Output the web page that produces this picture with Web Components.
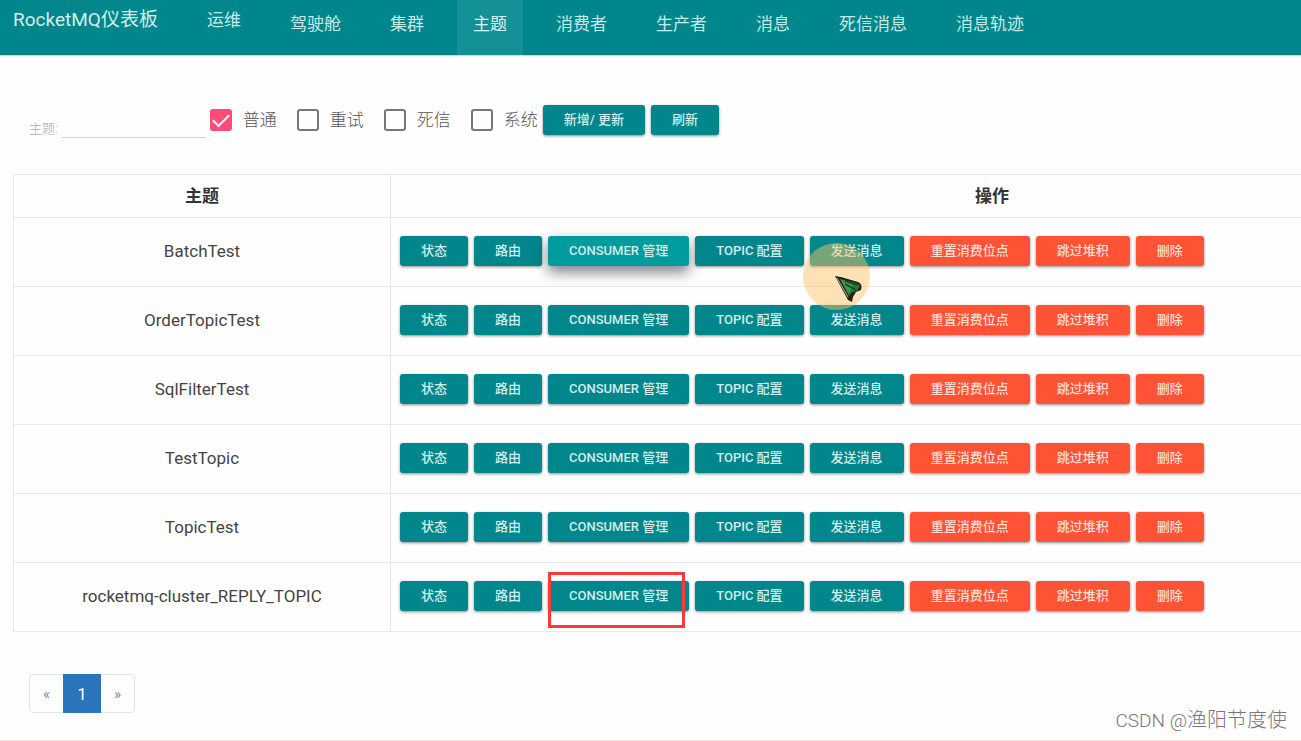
<!DOCTYPE html>
<html lang="zh-CN">
<head>
<meta charset="utf-8">
<title>RocketMQ仪表板</title>
<style>
body { margin: 0; background: #fefefe; font-family: Roboto, "Noto Sans CJK SC", sans-serif; font-size: 17px; line-height: 24px; color: #333; }
</style>
</head>
<body>
<mq-dashboard></mq-dashboard>
<script>
function define(name, html, setup) {
  const template = document.createElement('template');
  template.innerHTML = '<style>*,:host{box-sizing:border-box}:host([hidden]){display:none}</style>' + html;
  customElements.define(name, class extends HTMLElement {
    constructor() {
      super();
      this.attachShadow({ mode: 'open' }).append(template.content.cloneNode(true));
    }
    connectedCallback() { if (setup) setup(this, this.shadowRoot); }
  });
}

define('mq-nav-item', `
<style>
:host { display: flex; }
a { display: flex; align-items: flex-start; padding: 12px 16px 0; color: #c6eaea; text-decoration: none; white-space: nowrap; }
:host([active]) a { background: #149196; color: #d8f2f2; }
:host([menu]) a { padding-top: 8px; }
</style>
<a href="#"><slot></slot></a>`);

define('mq-navbar', `
<style>
:host { display: block; }
nav { display: flex; height: 55px; background: #00868b; box-shadow: 0 1px 0 #b4e4e6; }
.brand { padding: 8px 33px 0 13px; font-size: 19px; color: #d3eeee; text-decoration: none; white-space: nowrap; }
.items { display: flex; gap: 17px; }
</style>
<nav>
<a class="brand" href="#">RocketMQ仪表板</a>
<div class="items">
<mq-nav-item menu>运维</mq-nav-item><mq-nav-item>驾驶舱</mq-nav-item><mq-nav-item>集群</mq-nav-item>
<mq-nav-item active>主题</mq-nav-item><mq-nav-item>消费者</mq-nav-item><mq-nav-item>生产者</mq-nav-item>
<mq-nav-item>消息</mq-nav-item><mq-nav-item>死信消息</mq-nav-item><mq-nav-item>消息轨迹</mq-nav-item>
</div>
</nav>`);

define('mq-button', `
<style>
:host { display: inline-flex; position: relative; }
button { height: 30px; padding: 0 21px 1px; border: 0; border-radius: 3px; background: #00868b; color: #d0eeee; font: 500 13px/20px Roboto, "Noto Sans CJK SC", sans-serif; white-space: nowrap; box-shadow: 0 1px 3px rgba(0,0,0,.45); cursor: pointer; }
:host([kind="danger"]) button { background: #ff5335; color: #ffddd5; }
:host([raised]) button { background: #009b9c; box-shadow: 0 6px 14px rgba(0,0,0,.5); }
::slotted([slot="overlay"]) { position: absolute; z-index: 2; pointer-events: none; }
</style>
<button type="button"><slot></slot></button><slot name="overlay"></slot>`);

define('mq-check', `
<style>
:host { display: block; }
label { display: flex; align-items: center; gap: 11px; color: #555; font-weight: 300; white-space: nowrap; }
input { appearance: none; display: grid; place-items: center; width: 22px; height: 22px; margin: 0; border: 2px solid #777; border-radius: 3px; background: #fefefe; }
input:checked { border-color: #ff4b78; background: #ff4b78; }
input:checked::after { content: ""; width: 14px; height: 7px; margin-bottom: 4px; border: solid #fff; border-width: 0 0 2px 2px; transform: rotate(-45deg); }
</style>
<label><input type="checkbox"><span><slot></slot></span></label>`, (host, root) => {
  root.querySelector('input').checked = host.hasAttribute('checked');
});

define('mq-filter', `
<style>
:host { display: block; }
form { display: flex; align-items: center; padding: 47px 29px 36px; }
.topic { display: flex; align-items: flex-end; gap: 4px; height: 36px; margin-right: 4px; color: #aaa; font-size: 13px; font-weight: 300; line-height: 18px; white-space: nowrap; }
.topic input { width: 144px; height: 26px; padding: 0; border: 0; border-bottom: 1px solid #d2d2d2; background: transparent; font: inherit; outline: 0; }
.checks { display: flex; gap: 20px; margin-right: 5px; }
.actions { display: flex; gap: 6px; }
</style>
<form>
<label class="topic"><span>主题:</span><input type="text"></label>
<div class="checks"><mq-check checked>普通</mq-check><mq-check>重试</mq-check><mq-check>死信</mq-check><mq-check>系统</mq-check></div>
<div class="actions"><mq-button>新增/ 更新</mq-button><mq-button>刷新</mq-button></div>
</form>`);

define('mq-pointer', `
<style>
:host { left: -7px; top: 7px; width: 67px; height: 67px; border-radius: 50%; background: rgba(253,196,104,.48); }
svg { display: block; width: 67px; height: 67px; }
</style>
<svg viewBox="0 0 67 67" aria-hidden="true">
<path d="M32 33 L38 34 L55 39 Q60 41 58 47 L53 49 L50 54 L49 59 L45 57 Z" fill="#2a211b"/>
<path d="M37 36 L52 40 L57 42 L54 48 L49 49 L46 53 Z" fill="#237b32"/>
<path d="M37 36 L50 42 L46 51 Z" fill="#3b9b4a"/>
<path d="M42 38 L55 42 M42 41 L53 47" stroke="#1b4a22" stroke-width="1.5" fill="none"/>
<path d="M34 35 L45 54" stroke="#b5b89a" stroke-width="1" fill="none"/>
</svg>`);

define('mq-mark', `
<style>:host { left: 0; top: -9px; width: 137px; height: 56px; border: 3px solid #fb3b3b; }</style>`);

define('mq-topic-table', `
<style>
:host { display: block; padding-left: 13px; overflow: hidden; }
table { width: calc(100% + 293px); table-layout: fixed; border-collapse: collapse; }
th, td { border: 1px solid #e9e9e9; padding: 0; }
col:first-child { width: 377px; }
th { height: 43px; font-weight: 700; }
td { height: 69px; padding-bottom: 2px; text-align: center; color: #444; }
.ops { display: flex; gap: 6px; padding-left: 9px; }
</style>
<table>
<colgroup><col><col></colgroup>
<thead><tr><th scope="col">主题</th><th scope="col">操作</th></tr></thead>
<tbody></tbody>
</table>`, (host, root) => {
  const topics = ['BatchTest', 'OrderTopicTest', 'SqlFilterTest', 'TestTopic', 'TopicTest', 'rocketmq-cluster_REPLY_TOPIC'];
  root.querySelector('tbody').innerHTML = topics.map((topic, i) => `
<tr><td>${topic}</td><td><div class="ops">
<mq-button>状态</mq-button><mq-button>路由</mq-button>
<mq-button${i === 0 ? ' raised' : ''}>CONSUMER 管理${i === 5 ? '<mq-mark slot="overlay"></mq-mark>' : ''}</mq-button>
<mq-button>TOPIC 配置</mq-button>
<mq-button>发送消息${i === 0 ? '<mq-pointer slot="overlay"></mq-pointer>' : ''}</mq-button>
<mq-button kind="danger">重置消费位点</mq-button><mq-button kind="danger">跳过堆积</mq-button><mq-button kind="danger">删除</mq-button>
</div></td></tr>`).join('');
});

define('mq-pager', `
<style>
:host { display: flex; padding: 42px 29px 27px; }
nav { display: flex; height: 39px; border: 1px solid #e4e4e4; border-radius: 4px; }
a { display: grid; place-items: center; width: 33px; color: #888; text-decoration: none; font-size: 15px; }
a[aria-current] { width: 38px; margin: -1px 0; background: #2a75bc; color: #fff; font-size: 17px; }
</style>
<nav aria-label="分页"><a href="#">«</a><a href="#" aria-current="page">1</a><a href="#">»</a></nav>`);

define('mq-dashboard', `
<style>
:host { display: block; position: relative; min-height: 100vh; border-bottom: 1px solid #ffdede; overflow: hidden; }
.credit { position: absolute; right: 14px; bottom: 6px; color: #777; font-size: 20px; font-weight: 300; line-height: 26px; white-space: nowrap; }
.credit span { font-size: 19px; }
</style>
<mq-navbar></mq-navbar>
<main><mq-filter></mq-filter><mq-topic-table></mq-topic-table><mq-pager></mq-pager></main>
<div class="credit"><span>CSDN @</span>渔阳节度使</div>`);
</script>
</body>
</html>
